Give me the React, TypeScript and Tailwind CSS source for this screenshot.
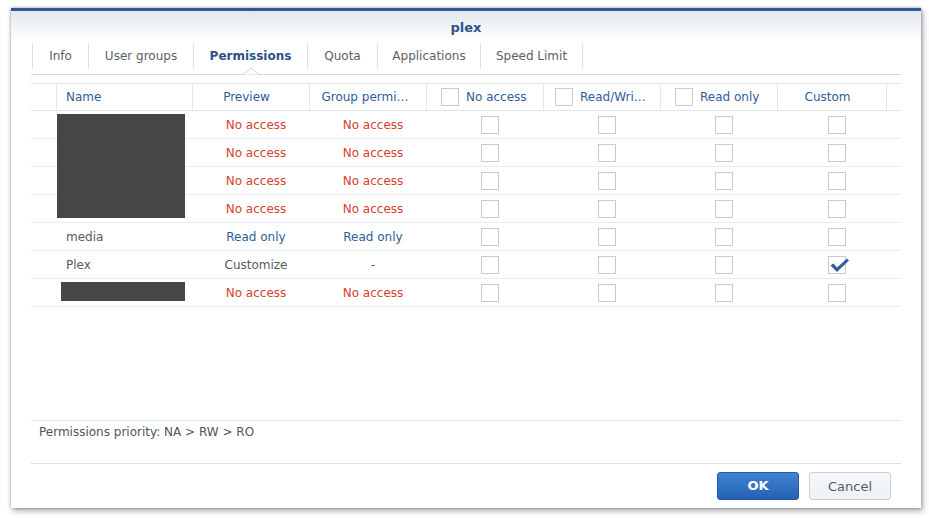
import React from "react";

type Row = {
  name: string;
  preview: string;
  group: string;
  tone: "red" | "blue" | "gray";
  custom?: boolean;
};

const rows: Row[] = [
  { name: "", preview: "No access", group: "No access", tone: "red" },
  { name: "", preview: "No access", group: "No access", tone: "red" },
  { name: "", preview: "No access", group: "No access", tone: "red" },
  { name: "", preview: "No access", group: "No access", tone: "red" },
  { name: "media", preview: "Read only", group: "Read only", tone: "blue" },
  { name: "Plex", preview: "Customize", group: "-", tone: "gray", custom: true },
  { name: "", preview: "No access", group: "No access", tone: "red" },
];

const tabs = [
  { label: "Info", w: "w-[56px]" },
  { label: "User groups", w: "w-[105px]" },
  { label: "Permissions", w: "w-[114px]", active: true },
  { label: "Quota", w: "w-[70px]" },
  { label: "Applications", w: "w-[103px]" },
  { label: "Speed Limit", w: "w-[103px]", last: true },
];

const toneClass = {
  red: "text-[#d6402f]",
  blue: "text-[#2f5d97]",
  gray: "text-[#555b63]",
};

const cols =
  "grid grid-cols-[26px_136px_117px_117px_117px_117px_117px_109px_1fr]";

function Box({ checked }: { checked?: boolean }) {
  return (
    <span className="relative block h-[18px] w-[18px] border-[1.5px] border-[#c2cbd7] bg-white">
      {checked && (
        <svg
          className="absolute left-[0px] top-[0px]"
          width={21}
          height={17}
          viewBox="0 0 21 17"
          aria-hidden="true"
        >
          <path
            d="M1.5 8.5 L4.5 6.5 L8 10.5 L18 1.5 L20 3.5 L8 15 Z"
            fill="#2f5f9c"
          />
        </svg>
      )}
    </span>
  );
}

function HeadCheck({ label, pad }: { label: string; pad: string }) {
  return (
    <div
      className={`flex items-center gap-[7px] border-r border-[#e1e7ee] pr-[6px] ${pad}`}
    >
      <span className="shrink-0">
        <Box />
      </span>
      <span className="whitespace-nowrap">{label}</span>
    </div>
  );
}

export default function App() {
  return (
    <div
      className="h-[518px] w-[929px] bg-white pl-[11px] pt-[8px] text-[12px] text-[#555b63]"
      style={{ fontFamily: '"DejaVu Sans", Verdana, sans-serif' }}
    >
      <div className="flex h-[500px] w-[910px] flex-col border-t-[3px] border-[#2d5a8f] bg-white shadow-[0_0_3px_rgba(0,0,0,0.35),2px_3px_6px_rgba(0,0,0,0.3)]">
        {/* title bar */}
        <div className="flex h-[30px] shrink-0 items-center justify-center bg-gradient-to-b from-[#e2e8ef] to-white pt-[3px] text-[13px] font-bold text-[#2e5285]">
          plex
        </div>

        <div className="flex flex-1 flex-col px-[20px]">
          {/* tabs */}
          <div className="flex shrink-0 border-b border-[#d3d8df] pb-[6px] pl-[1px] pt-[3px]">
            {tabs.map((t) => (
              <div
                key={t.label}
                className={`relative flex h-[24px] items-center justify-center border-l border-[#d8e1eb] ${t.w} ${
                  t.last ? "border-r" : ""
                } ${t.active ? "font-bold text-[#2e5285]" : "text-[#5b5f66]"}`}
              >
                {t.label}
                {t.active && (
                  <svg
                    className="absolute left-1/2 top-[23px] -translate-x-1/2"
                    width={16}
                    height={8}
                    viewBox="0 0 16 8"
                    aria-hidden="true"
                  >
                    <path d="M0 7.5 L8 1 L16 7.5 Z" fill="#ffffff" />
                    <path
                      d="M0 7.5 L8 1 L16 7.5"
                      fill="none"
                      stroke="#d0d5dc"
                      strokeWidth={1}
                    />
                  </svg>
                )}
              </div>
            ))}
          </div>

          {/* table */}
          <div className="mt-[8px] flex-1">
            <div
              className={`${cols} h-[28px] border-y border-[#dfe6ee] text-[#2f5d97]`}
            >
              <div className="border-r border-[#e1e7ee]" />
              <div className="flex items-center border-r border-[#e1e7ee] pl-[9px]">
                Name
              </div>
              <div className="flex items-center justify-center border-r border-[#e1e7ee] pr-[9px]">
                Preview
              </div>
              <div className="flex items-center justify-center border-r border-[#e1e7ee] pr-[6px]">
                <span className="whitespace-nowrap">Group permi…</span>
              </div>
              <HeadCheck label="No access" pad="pl-[14px]" />
              <HeadCheck label="Read/Wri…" pad="pl-[11px]" />
              <HeadCheck label="Read only" pad="pl-[14px]" />
              <div className="flex items-center justify-center border-r border-[#e1e7ee] pr-[9px]">
                Custom
              </div>
              <div />
            </div>

            <div className="relative">
              {rows.map((r, i) => (
                <div
                  key={i}
                  className={`${cols} h-[28px] border-b border-[#e8edf3]`}
                >
                  <div />
                  <div className="flex items-center pl-[9px] text-[#555b63]">
                    {r.name}
                  </div>
                  <div
                    className={`flex items-center justify-center pl-[9px] ${toneClass[r.tone]}`}
                  >
                    {r.preview}
                  </div>
                  <div
                    className={`flex items-center justify-center pl-[9px] ${toneClass[r.tone]}`}
                  >
                    {r.group}
                  </div>
                  <div className="flex items-center justify-center pl-[9px]">
                    <Box />
                  </div>
                  <div className="flex items-center justify-center pl-[9px]">
                    <Box />
                  </div>
                  <div className="flex items-center justify-center pl-[9px]">
                    <Box />
                  </div>
                  <div className="flex items-center justify-center pl-[9px]">
                    <Box checked={r.custom} />
                  </div>
                  <div />
                </div>
              ))}
              {/* redacted names */}
              <div className="absolute left-[26px] top-[3px] h-[104px] w-[128px] bg-[#464646]" />
              <div className="absolute left-[30px] top-[171px] h-[19px] w-[124px] bg-[#464646]" />
            </div>
          </div>

          {/* priority note */}
          <div className="h-[43px] shrink-0 border-t border-[#e3e9f0] pl-[8px] pt-[2px] leading-[18px] text-[#50555c]">
            Permissions priority: NA &gt; RW &gt; RO
          </div>
        </div>

        {/* buttons */}
        <div className="mx-[20px] flex h-[45px] shrink-0 items-center justify-end gap-[10px] border-t border-[#d9dee4] pr-[10px]">
          <button className="h-[28px] w-[82px] rounded-[3px] border border-[#2659a3] bg-gradient-to-b from-[#3f84d4] to-[#2562b1] text-[13px] font-bold text-white">
            OK
          </button>
          <button className="h-[28px] w-[82px] rounded-[3px] border border-[#c7d0db] bg-gradient-to-b from-[#f7f9fb] to-[#edf1f5] pt-[1px] text-[13px] text-[#555b63]">
            Cancel
          </button>
        </div>
      </div>
    </div>
  );
}
